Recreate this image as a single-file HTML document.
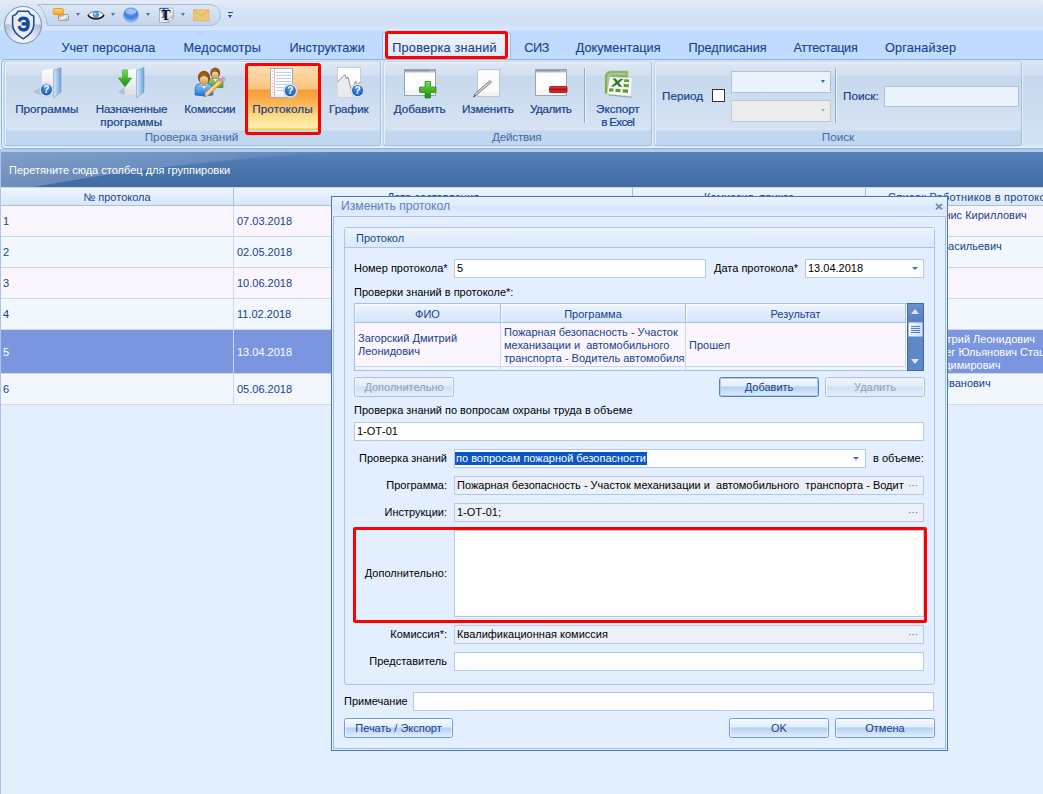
<!DOCTYPE html>
<html lang="ru">
<head>
<meta charset="utf-8">
<title>Изменить протокол</title>
<style>
*{box-sizing:border-box;margin:0;padding:0}
html,body{width:1043px;height:794px;overflow:hidden;background:#e3efff}
body{position:relative;font-family:"Liberation Sans",sans-serif;font-size:11px;color:#000}
.a{position:absolute;white-space:nowrap}
/* ---------- title / tabs ---------- */
#title{left:0;top:0;width:1043px;height:30px;background:linear-gradient(#e3e9f5 0,#e3e9f5 3px,#dce8f8 4px,#d6e4f7 12px,#cfdff5 22px,#d6e5f8 29px)}
#tabs{left:0;top:29px;width:1043px;height:31px;background:#bfdbff;border-top:1px solid #dbe9fb}
.tab{top:40px;font-size:12.7px;color:#15428b;-webkit-text-stroke:.1px #15428b;height:16px;line-height:16px}
#tabsel{left:382px;top:32px;width:129px;height:28px;background:linear-gradient(#eef4fc,#dde8f7);border:1px solid #9dbde8;border-bottom:0;border-radius:4px 4px 0 0}
/* ---------- ribbon ---------- */
#ribbon{left:1px;top:59px;width:1060px;height:90px;background:linear-gradient(#dbe6f4 0,#d1dff2 15px,#c7d8ed 16px,#d3e2f4 100%);border:1px solid #8db2e3;border-radius:4px;box-shadow:inset 1px -1px 0 #e4f5fc,inset 0 -2px 0 #dcedfa}
.grp{top:61px;height:85px;border:1px solid #a9c1de;border-color:#c3d4ea #a6bfe0 #9fbbe0 #c0d2ea;box-shadow:inset 1px 1px 0 #e8f0f9,1px 0 0 #e4edf8;border-radius:3px;background:linear-gradient(#dee8f5 0,#d3e0f1 13px,#c7d8ed 14px,#d6e3f3 68px,#c1d6ef 69px,#c1d6ef 100%)}
.gcap{top:130px;height:14px;line-height:14px;font-size:11.7px;color:#3e6aaa;text-align:center}
.rb{font-size:11.7px;color:#15428b;-webkit-text-stroke:.2px #15428b;text-align:center;line-height:13px}
/* ---------- grid ---------- */
#gp{left:0;top:152px;width:1043px;height:35px;background:linear-gradient(#5782ba 0,#4a75ad 50%,#426ba3 100%);overflow:hidden}
#strip{left:0;top:149px;width:1043px;height:3px;background:#b4cbea}
#ledge{left:0;top:149px;width:1px;height:645px;background:#a9c4ea;z-index:5}
.hd{top:187px;height:19px;background:linear-gradient(#eef5fe,#d8e7fb);border-right:1px solid #a6c0e4;border-bottom:1px solid #a6c0e4;border-top:1px solid #c4d6ef;text-align:center;line-height:17px;padding-top:1px;color:#15428b}
.row{left:0;width:1043px;border-bottom:1px solid #c9d9f0;color:#15428b}
.c{position:absolute;top:0;bottom:0;border-right:1px solid #c9d9f0;padding-left:3px;display:flex;align-items:center;white-space:nowrap;overflow:hidden}
.t4{line-height:13px;height:13px}
.odd{background:#fbf5fd}.even{background:#f2f7fe}
.sel{background:#7b96de;color:#fff}
/* ---------- dialog ---------- */
#dlg{left:331px;top:196px;width:617px;height:555px;background:#e3efff;border:1px solid #4a76b8}
.lb{height:14px;line-height:14px;margin-left:-1px}
.in{background:#fff;border:1px solid #b4c9e6;height:19px;line-height:17px;padding-left:2px}
.ro{background:#ebf0f9}
.btn{height:20px;border:1px solid #6f9ad8;border-radius:2.500px;background:linear-gradient(#f6fafe 0,#e3edfb 44%,#b3d0f4 50%,#c6dcf8 70%,#e3eefc 100%);box-shadow:inset 1px 0 0 rgba(255,255,255,.55),inset -1px 0 0 rgba(255,255,255,.55);text-align:center;line-height:18px;color:#15428b}
.btn.dis{color:#8e9fbd;border-color:#a9c0e2;background:linear-gradient(#eef4fc 0,#e3ecf9 44%,#d0dff2 50%,#d9e6f6 70%,#e6eefa 100%)}

#dttl{left:0;top:0;width:615px;height:19px;background:linear-gradient(#eaf2fe 0,#dfebfc 9px,#d6e5fa 10px,#e3eefd 100%)}
#dfr{left:1px;top:19px;width:613px;height:533px;border:1px solid #a3c0e8;background:#e3efff}
#gb{left:12px;top:30px;width:591px;height:458px;border:1px solid #a9c6ee;border-radius:3px;background:#e3efff}
#gbc{left:13px;top:31px;width:589px;height:20px;background:linear-gradient(#ecf4fe,#d9e8fb);border-bottom:1px solid #a9c6ee}
.lb.r{left:20px;width:96px;text-align:right}
.arr{width:0;height:0;border:3px solid transparent;border-top:3px solid #3a6cc0;border-bottom:0}
.dots{position:absolute;right:5px;top:0;color:#3a6cc0;letter-spacing:0px;font-size:10px}
#ig{left:22px;top:106px;width:570px;height:68px;border:1px solid #a6c0e4;background:#fbf5fd;overflow:hidden}
.ih{top:0;height:19px;background:linear-gradient(#ecf4fe,#d5e5fa);box-shadow:inset 1px 1px 0 #f7fafe;border-right:1px solid #a6c0e4;border-bottom:1px solid #a6c0e4;text-align:center;line-height:17px;padding-top:2px;color:#15428b}
.ir{top:19px;height:44px;border-right:1px solid #c9d9f0;border-bottom:1px solid #c9d9f0;padding-left:3px;line-height:13px;color:#15428b}
#sb{left:575px;top:106px;width:17px;height:68px;background:#5e86c8;border:1px solid #3f68a8}
#thumb{left:0;top:18px;width:15px;height:15px;background:linear-gradient(90deg,#f4f8fd,#cfdff4);border:1px solid #9db9e4;border-radius:1px;padding:3px 2px 0 2px}
#thumb i{display:block;height:1px;background:#5a7fbd;margin-bottom:1px}
.tri{width:0;height:0;border:4.5px solid transparent}
.tri.up{border-bottom:5px solid #dbe7f8;border-top:0}
.tri.dn{border-top:5px solid #dbe7f8;border-bottom:0}
.btn.foc{border-color:#4f82cf;box-shadow:inset 0 0 0 1px #a9cbf5}

#qat{left:38px;top:4px;width:184px;height:22px;border:1px solid #a9bfdf;border-radius:0 11px 11px 0;background:linear-gradient(#dbe6f5,#c6d6ec)}
#appb{left:3px;top:5px;width:40px;height:40px}
.qarr{width:0;height:0;border:2.500px solid transparent;border-top:3px solid #4a6fb5;border-bottom:0}
#selbtn{left:248px;top:66px;width:71px;height:64px;border-radius:2px;background:linear-gradient(#fedcb0 0,#fbc47f 23px,#f79a35 24px,#fbb858 38px,#fde08f 52px,#fdeeb0 62px,#fbc840 63px,#fbc840 64px)}
.rin{background:#eaf2fb;border:1px solid #abc1de}
</style>
</head>
<body>
<div class="a" id="title"></div>
<div class="a" id="tabs"></div>
<div class="a" id="tabsel"></div>
<div class="a tab" style="left:61.4px;letter-spacing:0.02px">Учет персонала</div>
<div class="a tab" style="left:183.4px;letter-spacing:0.2px">Медосмотры</div>
<div class="a tab" style="left:289.4px;letter-spacing:-0.02px">Инструктажи</div>
<div class="a tab" style="left:392.3px;letter-spacing:0.2px">Проверка знаний</div>
<div class="a tab" style="left:524.2px;letter-spacing:-0.42px">СИЗ</div>
<div class="a tab" style="left:575.7px;letter-spacing:0.04px">Документация</div>
<div class="a tab" style="left:688.5px;letter-spacing:-0.05px">Предписания</div>
<div class="a tab" style="left:793.4px;letter-spacing:-0.29px">Аттестация</div>
<div class="a tab" style="left:884.9px;letter-spacing:0.21px">Органайзер</div>
<div class="a" id="ribbon"></div>
<div class="a grp" style="left:4px;width:377px"></div>
<div class="a grp" style="left:383px;width:269px"></div>
<div class="a grp" style="left:654px;width:368px"></div>
<div class="a gcap" style="left:654px;width:368px">Поиск</div>
<!--RIBBON-BUTTONS-->
<!-- QAT -->
<svg class="a" style="left:36px;top:3px" width="190" height="25" viewBox="0 0 190 25"><defs><linearGradient id="qg" x1="0" y1="0" x2="0" y2="1"><stop offset="0" stop-color="#dde7f5"/><stop offset="1" stop-color="#c3d4ec"/></linearGradient></defs><path d="M1.500 1.500H174a10.500 10.500 0 0 1 0 21H11.500C10 12 7 6 1.500 1.500z" fill="url(#qg)" stroke="#a6bcde" stroke-width="1"/></svg>
<div class="a" id="appb"><svg width="40" height="40" viewBox="0 0 40 40"><defs><radialGradient id="ag" cx="50%" cy="105%" r="75%"><stop offset="0" stop-color="#ffffff"/><stop offset="0.45" stop-color="#e3e9f2"/><stop offset="1" stop-color="#aab9d2"/></radialGradient><linearGradient id="ag2" x1="0" y1="0" x2="0" y2="1"><stop offset="0" stop-color="#fdfeff"/><stop offset="1" stop-color="#e6ecf5"/></linearGradient><clipPath id="ac"><circle cx="20" cy="20" r="18.200"/></clipPath></defs><circle cx="20" cy="20" r="18.500" fill="url(#ag)" stroke="#8e9fbb" stroke-width="1"/><rect x="0" y="0" width="40" height="19.500" fill="url(#ag2)" clip-path="url(#ac)" opacity=".92"/><circle cx="20" cy="20" r="18.500" fill="none" stroke="#8e9fbb" stroke-width="1"/><path d="M14.800 6.200h10.800q.6 3.300 5.200 4.800v8.500c0 6.500-4 10.500-10.600 14.300-6.600-3.800-10.600-7.800-10.600-14.300v-8.500q4.600-1.500 5.200-4.800z" fill="#ececf0" stroke="#0f4c9c" stroke-width="1.500" stroke-linejoin="round"/><text transform="translate(20.800 25.800) scale(.88 1)" font-family="Liberation Sans,sans-serif" font-weight="bold" font-size="20" fill="#0f4c9c" stroke="#0f4c9c" stroke-width=".9" text-anchor="middle">Э</text></svg></div>
<!-- qat icons -->
<svg class="a" style="left:52px;top:7px" width="18" height="15" viewBox="0 0 18 15"><defs><linearGradient id="q1" x1="0" y1="0" x2="1" y2="1"><stop offset="0" stop-color="#8f8f8f"/><stop offset=".5" stop-color="#f4f4f4"/><stop offset="1" stop-color="#a9a9a9"/></linearGradient><linearGradient id="q2" x1="0" y1="0" x2="0" y2="1"><stop offset="0" stop-color="#ffd36a"/><stop offset="1" stop-color="#f5a623"/></linearGradient></defs><rect x="6.500" y="7.500" width="10" height="5.800" rx=".8" fill="url(#q1)" stroke="#8a8a8a" stroke-width=".8"/><rect x="1.300" y="1.500" width="10" height="6" rx="1.500" fill="url(#q2)" stroke="#e8961a" stroke-width=".9"/><path d="M10.800 7v2.500" stroke="#e8961a" stroke-width="1"/></svg>
<div class="a qarr" style="left:76px;top:13px"></div>
<svg class="a" style="left:87px;top:9px" width="18" height="12" viewBox="0 0 18 12"><path d="M1 6C4 1.200 14 1.200 17 6 14 10.800 4 10.800 1 6z" fill="#fff"/><path d="M1 6C4 1.200 14 1.200 17 6" fill="none" stroke="#6b6b6b" stroke-width="1"/><path d="M1 6C4 11 14 11 17 6" fill="none" stroke="#1a1a1a" stroke-width="1.700"/><circle cx="9" cy="5.800" r="3.200" fill="#4a97e2"/><circle cx="8.200" cy="4.800" r="1.200" fill="#a8d4fb"/></svg>
<div class="a qarr" style="left:111px;top:13px"></div>
<svg class="a" style="left:122px;top:7px" width="18" height="17" viewBox="0 0 18 17"><defs><radialGradient id="sg" cx="50%" cy="22%" r="80%"><stop offset="0" stop-color="#6ea5ea"/><stop offset="0.550" stop-color="#3f80dc"/><stop offset="1" stop-color="#b5d5f8"/></radialGradient></defs><circle cx="9" cy="8.300" r="7.800" fill="url(#sg)"/><ellipse cx="9" cy="4.500" rx="5.500" ry="3" fill="#cfe3fb" opacity=".55"/></svg>
<div class="a qarr" style="left:146px;top:13px"></div>
<svg class="a" style="left:158px;top:6px" width="18" height="18" viewBox="0 0 18 18"><defs><linearGradient id="tg" x1="0" y1="0" x2="1" y2="1"><stop offset="0" stop-color="#ffffff"/><stop offset=".6" stop-color="#e9e9e9"/><stop offset="1" stop-color="#9c9c9c"/></linearGradient></defs><path d="M1.500 2h11.500q2.500 0 2.500 2.500v7.500l-4.500 4.500h-9.500z" fill="url(#tg)" stroke="#a5a5a5" stroke-width=".8"/><path d="M11 16.500v-3.500q0-1 1-1h3.500z" fill="#f6f6f6" stroke="#a5a5a5" stroke-width=".6"/><text x="5.800" y="12.300" font-family="Liberation Serif,serif" font-weight="bold" font-size="14" text-anchor="middle" fill="#2b63c4">T</text><text x="7.800" y="14" font-family="Liberation Serif,serif" font-weight="bold" font-size="14" text-anchor="middle" fill="#111">T</text></svg>
<div class="a qarr" style="left:181px;top:13px"></div>
<svg class="a" style="left:193px;top:9px" width="17" height="13" viewBox="0 0 17 13"><rect x=".5" y=".8" width="15.500" height="11" fill="#eec878" stroke="#ddb663" stroke-width=".8"/><path d="M.8 1.200l7.500 6 7.500-6" fill="none" stroke="#d9ad55" stroke-width=".9"/><path d="M.8 11.500l5.200-5M15.700 11.500l-5.200-5" fill="none" stroke="#e3bb69" stroke-width=".6"/></svg>
<div class="a" style="left:228px;top:11.500px;width:5px;height:1.500px;background:#1f418e"></div>
<div class="a qarr" style="left:228px;top:14.500px;border-top-color:#1f418e;border-top-width:3.500px"></div>
<!-- group 1 buttons -->
<div class="a" id="selbtn"></div>
<div class="a" style="left:245px;top:63px;width:76px;height:72px;border:3px solid #f00;border-radius:3px"></div>
<div class="a" style="left:385px;top:31px;width:123px;height:28px;border:3px solid #f00;border-radius:3px"></div>
<div class="a" style="left:584px;top:68px;width:1px;height:55px;background:#8fa9cf"></div>
<div class="a" style="left:585px;top:68px;width:1px;height:55px;background:#e8f0fa"></div>
<div class="a rb" style="left:662px;top:89px;text-align:left">Период</div>
<div class="a" style="left:712px;top:89px;width:13px;height:13px;background:#fff;border:1px solid #333"></div>
<div class="a rin" style="left:731px;top:71px;width:100px;height:22px"></div>
<div class="a rin" style="left:731px;top:100px;width:100px;height:22px;background:#ececec;border-color:#c3c8d0"></div>
<div class="a qarr" style="left:820.500px;top:80px;border-top-color:#3a62a8"></div>
<div class="a qarr" style="left:820.500px;top:109px;border-top-color:#b3b3b3"></div>
<div class="a" style="left:835px;top:68px;width:1px;height:55px;background:#8fa9cf"></div>
<div class="a" style="left:836px;top:68px;width:1px;height:55px;background:#e8f0fa"></div>
<div class="a rb" style="left:843px;top:89px;text-align:left">Поиск:</div>
<div class="a rin" style="left:884px;top:86px;width:135px;height:21px"></div>
<div class="a rb" style="left:15.2px;top:102px;letter-spacing:-0.0px">Программы</div>
<div class="a rb" style="left:95.7px;top:102px;letter-spacing:-0.15px">Назначенные</div>
<div class="a rb" style="left:100.2px;top:115px;letter-spacing:0.11px">программы</div>
<div class="a rb" style="left:184.2px;top:102px;letter-spacing:-0.18px">Комиссии</div>
<div class="a rb" style="left:252.2px;top:102px;letter-spacing:0.1px">Протоколы</div>
<div class="a rb" style="left:329.0px;top:102px;letter-spacing:-0.04px">График</div>
<div class="a rb" style="left:393.7px;top:102px;letter-spacing:0.04px">Добавить</div>
<div class="a rb" style="left:462.1px;top:102px;letter-spacing:-0.14px">Изменить</div>
<div class="a rb" style="left:530.0px;top:102px;letter-spacing:-0.46px">Удалить</div>
<div class="a rb" style="left:596.1px;top:102px;letter-spacing:-0.05px">Экспорт</div>
<div class="a rb" style="left:601.3px;top:115px;letter-spacing:-0.74px">в Excel</div>
<div class="a gcap" style="left:144.7px;letter-spacing:0.02px">Проверка знаний</div>
<div class="a gcap" style="left:492.1px;letter-spacing:-0.24px">Действия</div>
<!--ICONS-->
<svg width="0" height="0" style="position:absolute"><defs>
<linearGradient id="fb" x1="0" y1="0" x2="1" y2="0"><stop offset="0" stop-color="#d9e9f8"/><stop offset="1" stop-color="#6fa3dc"/></linearGradient>
<linearGradient id="fw" x1="0" y1="0" x2="0" y2="1"><stop offset="0" stop-color="#ffffff"/><stop offset="1" stop-color="#d9dde3"/></linearGradient>
<radialGradient id="bq" cx="50%" cy="35%" r="65%"><stop offset="0" stop-color="#4f9be8"/><stop offset="1" stop-color="#1559b5"/></radialGradient>
<linearGradient id="gp2" x1="0" y1="0" x2="0" y2="1"><stop offset="0" stop-color="#7be04a"/><stop offset="1" stop-color="#148a10"/></linearGradient>
<linearGradient id="rm" x1="0" y1="0" x2="0" y2="1"><stop offset="0" stop-color="#e8474a"/><stop offset=".5" stop-color="#b80d12"/><stop offset="1" stop-color="#d9383c"/></linearGradient>
<linearGradient id="wt" x1="0" y1="0" x2="0" y2="1"><stop offset="0" stop-color="#8e9399"/><stop offset="1" stop-color="#c9cdd2"/></linearGradient>
<g id="badge"><circle cx="0" cy="0" r="7" fill="#e9edf2" stroke="#b9c0ca" stroke-width=".6"/><circle cx="0" cy="0" r="5.600" fill="url(#bq)"/><text x="0" y="3.600" font-family="Liberation Sans,sans-serif" font-weight="bold" font-size="10" fill="#fff" text-anchor="middle">?</text></g>
<g id="folder"><path d="M0 2l12-2v27l-12 1.500z" fill="url(#fw)" stroke="#cfd3d9" stroke-width=".5"/><path d="M12 2.500l7.500-3v24.500l-7.500 6z" fill="url(#fb)" stroke="#5f93cf" stroke-width=".5"/></g>
<g id="win"><rect x=".5" y=".5" width="31" height="26" fill="#fdfdfd" stroke="#9ea4ad"/><rect x="1" y="1" width="30" height="1.800" fill="#8d96a8"/><rect x="1" y="2.800" width="30" height="1" fill="#d5d9e0"/><path d="M25 1.900h1.200M27 1.900h1.200M29 1.900h1.200" stroke="#e6e9ee" stroke-width=".8"/><rect x="1" y="21" width="30" height="5" fill="#eceef1" opacity=".6"/></g>
</defs></svg>
<!-- Программы -->
<svg class="a" style="left:31px;top:66px" width="34" height="34" viewBox="0 0 34 34"><path d="M2 26l9-6v10z" fill="#9aa7b8" opacity=".5"/><use href="#folder" x="10.500" y="2"/><use href="#badge" x="15.400" y="23.800"/></svg>
<!-- Назначенные -->
<svg class="a" style="left:114px;top:66px" width="34" height="34" viewBox="0 0 34 34"><path d="M4 26l8-6v10z" fill="#9aa7b8" opacity=".5"/><use href="#folder" x="10.500" y="2"/><path d="M8.500 4h5v8h4.300l-6.800 8.800-6.800-8.800h4.300z" fill="url(#gp2)" stroke="#2a9a1c" stroke-width=".5"/></svg>
<!-- Комиссии -->
<svg class="a" style="left:194px;top:65px" width="34" height="34" viewBox="0 0 34 34"><defs>
<radialGradient id="hr" cx="45%" cy="35%" r="70%"><stop offset="0" stop-color="#b56a1e"/><stop offset="1" stop-color="#6e3509"/></radialGradient>
<linearGradient id="sk" x1="0" y1="0" x2="0" y2="1"><stop offset="0" stop-color="#f3d9a0"/><stop offset="1" stop-color="#c59a5c"/></linearGradient>
<linearGradient id="bl" x1="0" y1="0" x2="0" y2="1"><stop offset="0" stop-color="#8cc4f6"/><stop offset=".6" stop-color="#4d9ae8"/><stop offset="1" stop-color="#1d6fd2"/></linearGradient>
<linearGradient id="gn" x1="0" y1="0" x2="0" y2="1"><stop offset="0" stop-color="#9ccc6a"/><stop offset="1" stop-color="#5c9a30"/></linearGradient>
<linearGradient id="pc" x1="0" y1="0" x2="1" y2="1"><stop offset="0" stop-color="#f58a06"/><stop offset=".45" stop-color="#ffe3a8"/><stop offset=".6" stop-color="#fba21d"/><stop offset="1" stop-color="#e07c00"/></linearGradient></defs>
<path d="M14 22.500v-4.500c0-3 2-4.500 4.500-4.500h6c2.500 0 4.500 1.500 4.500 4.500v4.500z" fill="url(#gn)" stroke="#4f8a2a" stroke-width=".7"/><path d="M19 13.600l2.500 3 2.500-3z" fill="#f4f7ee"/>
<rect x="19.300" y="10" width="3.600" height="4" fill="#c59a5c"/><ellipse cx="21.200" cy="8" rx="4.900" ry="5.600" fill="url(#hr)"/><path d="M17.800 9.500c0-2 1.500-2.700 3.400-2.700s3.400.7 3.400 2.700c0 2.500-1.400 4.400-3.400 4.400s-3.400-1.900-3.400-4.400z" fill="url(#sk)"/>
<path d="M1.200 30v-6c0-3.500 2.300-5.200 5.200-5.200h7.200c2.900 0 5.200 1.700 5.200 5.200v6q-8.800 1.500-17.600 0z" fill="url(#bl)" stroke="#1b63c0" stroke-width=".8"/><path d="M6.500 19l3.500 4.800 3.500-4.800z" fill="#f3f7fc"/>
<rect x="7.800" y="17" width="4.400" height="4" fill="#c59a5c"/><ellipse cx="10" cy="12.300" rx="6" ry="6.500" fill="url(#hr)"/><path d="M5.800 14.500c0-2.500 1.800-3.300 4.200-3.300s4.200.8 4.200 3.300c0 3-1.800 5.500-4.200 5.500s-4.200-2.500-4.200-5.500z" fill="url(#sk)"/>
<path d="M10.300 31.800l1.500-4.300 13.400-12.300 2.600 2.900-13.400 12.200z" fill="url(#pc)" stroke="#c96f05" stroke-width=".5"/><path d="M10.300 31.800l1.500-4.300 2.600 2.800z" fill="#e9cf9c"/><path d="M10.300 31.800l.6-1.800 1.100 1.200z" fill="#3a3a3a"/><path d="M25.200 15.200l1.300-1.200 2.600 2.900-1.300 1.200z" fill="#b9bcc2" stroke="#8a8d93" stroke-width=".4"/><path d="M26.500 14l1.800-1.700c1.200-1.100 3.800 1.800 2.600 2.900l-1.800 1.700z" fill="#ee8fc3" stroke="#cf6aa5" stroke-width=".4"/></svg>
<!-- Протоколы -->
<svg class="a" style="left:269px;top:67px" width="34" height="34" viewBox="0 0 34 34"><rect x="1.500" y="1.500" width="22" height="29" fill="#fdfdfd" stroke="#a9adb3"/><rect x="2" y="27" width="21" height="3" fill="#eeeff2"/><path d="M5.500 2v28" stroke="#f2a0a0" stroke-width=".8"/><path d="M7 5.500h15M7 8.500h15M7 11.500h15M7 14.500h15M7 17.500h15M7 20.500h15M7 23.500h12" stroke="#b3cbec" stroke-width=".9"/><path d="M3.500 4v24" stroke="#9a9a9a" stroke-width=".8" stroke-dasharray=".8 2.200"/><use href="#badge" x="21.300" y="23.700"/></svg>
<!-- График -->
<svg class="a" style="left:336px;top:66px" width="34" height="34" viewBox="0 0 34 34"><rect x="1.500" y="1.500" width="23" height="29.500" fill="#fdfdfd" stroke="#c9ccd1"/><path d="M1.500 16L8.800 8.700l1.600 4.200 1.600-1.900L15.700 26l3.700-11 1.600 3 3.500-1.500V31H1.500z" fill="#ebebed"/><path d="M1.500 16L8.800 8.700l1.600 4.200 1.600-1.900L15.700 26l3.700-11 1.600 3 3.500-1.500" fill="none" stroke="#8a8e95" stroke-width="1"/><use href="#badge" x="21.600" y="24.500"/></svg>
<!-- Добавить -->
<svg class="a" style="left:404px;top:69px" width="34" height="31" viewBox="0 0 34 31"><use href="#win"/><path d="M21 12.500h5.500v5.500h5.500v5.500h-5.500v5.500h-5.500v-5.500h-5.500v-5.500h5.500z" fill="url(#gp2)" stroke="#2c8f22" stroke-width=".8"/></svg>
<!-- Изменить -->
<svg class="a" style="left:472px;top:69px" width="30" height="31" viewBox="0 0 30 31"><rect x="5.500" y=".5" width="22" height="27" fill="#fbfbfc" stroke="#c3c6cb"/><rect x="6" y="23" width="21" height="4" fill="#f0f1f3"/><path d="M1.500 28l2-4 14.500-12.500 1.500 1.700-14.500 12.500z" fill="#c9ccd1" stroke="#5d6168" stroke-width=".7"/><path d="M1.500 28l1-2 1 1z" fill="#222"/></svg>
<!-- Удалить -->
<svg class="a" style="left:535px;top:69px" width="34" height="31" viewBox="0 0 34 31"><use href="#win"/><rect x="14.500" y="17.500" width="17.500" height="6" rx="1" fill="url(#rm)" stroke="#8f0a0e" stroke-width=".8"/></svg>
<!-- Excel -->
<svg class="a" style="left:603px;top:69px" width="32" height="30" viewBox="0 0 32 30"><defs><linearGradient id="xg" x1="0" y1="0" x2="0" y2="1"><stop offset="0" stop-color="#8fb276"/><stop offset="1" stop-color="#7aa45f"/></linearGradient></defs><path d="M1.500 8.500c0-4.500 2.500-7 7-7h15.500q1.300 0 1.300 1.300v21q0 1.300-1.300 1.300h-21.200q-1.300 0-1.300-1.300z" fill="url(#xg)" stroke="#c4e2b2" stroke-width="1"/><path d="M4 9.500c0-3.500 2-5.500 5.500-5.500h13.500v2h-12.500c-3 0-4.500 1.500-4.500 4.500v12h-2z" fill="#b5d3a0" opacity=".7"/><path d="M5.300 25.800l23.300 2.400" stroke="#6d7f8a" stroke-width="1.200" opacity=".6"/><path d="M6.900 8l21.800 1.100-1.100 17.900-23.300-2.300z" fill="#fcfdf8" stroke="#e3ecd8" stroke-width=".5"/><g fill="#55a03a"><path d="M21.200 10.200l5 .3-.2 2.600-5-.3zM20.800 15l5.100.3-.2 3-5.100-.3zM6.300 19.200l4.300.3-.2 3.200-4.300-.3zM12.600 19.700l5 .3-.2 3.300-5-.3zM19.700 20.200l5.400.4-.2 3.300-5.400-.4z"/></g><path d="M9.500 9.300l3.300.2 1.800 2.400 2.800-2.200 3.200.2-4.600 3.800 3.200 4.300-3.200-.2-1.800-2.500-3.300 2.300-3.200-.2 5-4z" fill="#2e7d1c"/></svg>
<!--/ICONS-->
<!--/RIBBON-BUTTONS-->
<div class="a" id="strip"></div>
<div class="a" id="gp"><svg class="a" style="left:0;top:0" width="340" height="35" viewBox="0 0 340 35"><defs><linearGradient id="wg" x1="0" y1="0" x2="1" y2="0"><stop offset="0" stop-color="#fff" stop-opacity=".24"/><stop offset=".5" stop-color="#fff" stop-opacity=".17"/><stop offset="1" stop-color="#fff" stop-opacity=".03"/></linearGradient></defs><path d="M0 0H336Q170 10 34 35H0z" fill="url(#wg)"/></svg></div>
<div class="a" id="ledge"></div>
<div class="a" style="left:9px;top:163px;color:#fff;line-height:14px">Перетяните сюда столбец для группировки</div>
<!--GRID-->
<div class="a hd" style="left:0;width:234px;border-left:1px solid #c4d6ef">№ протокола</div>
<div class="a hd" style="left:234px;width:399px">Дата составления</div>
<div class="a hd" style="left:633px;width:233px">Комиссия, приказ</div>
<div class="a hd" style="left:866px;width:212px;text-align:left;padding-left:22px;letter-spacing:.25px">Список Работников в протоколе</div>
<div class="a row odd" style="top:206px;height:31px"><div class="c" style="left:0;width:234px">1</div><div class="c" style="left:234px;width:399px">07.03.2018</div><div class="c" style="left:633px;width:233px"></div><div class="a t4" style="left:890px;top:3px">Иванов Денис Кириллович</div></div>
<div class="a row even" style="top:237px;height:31px"><div class="c" style="left:0;width:234px">2</div><div class="c" style="left:234px;width:399px">02.05.2018</div><div class="c" style="left:633px;width:233px"></div><div class="a t4" style="left:872px;top:3px">Петров Иван Васильевич</div></div>
<div class="a row odd" style="top:268px;height:31px"><div class="c" style="left:0;width:234px">3</div><div class="c" style="left:234px;width:399px">10.06.2018</div><div class="c" style="left:633px;width:233px"></div></div>
<div class="a row even" style="top:299px;height:31px"><div class="c" style="left:0;width:234px">4</div><div class="c" style="left:234px;width:399px">11.02.2018</div><div class="c" style="left:633px;width:233px"></div></div>
<div class="a row sel" style="top:330px;height:44px"><div class="c" style="left:0;width:234px">5</div><div class="c" style="left:234px;width:399px">13.04.2018</div><div class="c" style="left:633px;width:233px"></div><div class="a t4" style="left:871px;top:3px">Загорский Дмитрий Леонидович</div><div class="a t4" style="left:880px;top:16px">Кузнецов Олег Юльянович Стацкевич</div><div class="a t4" style="left:885px;top:29px">Сергей Владимирович</div></div>
<div class="a row even" style="top:374px;height:31px"><div class="c" style="left:0;width:234px">6</div><div class="c" style="left:234px;width:399px">05.06.2018</div><div class="c" style="left:633px;width:233px"></div><div class="a t4" style="left:881px;top:3px">Котов Петр Иванович</div></div>
<!--/GRID-->
<!--DIALOG-->
<div class="a" id="dlg"><div class="a" style="left:0;top:0;width:0;height:0">
<div class="a" id="dttl"></div>
<div class="a" id="dfr"></div>
<div class="a" style="left:9px;top:1px;font-size:12.15px;color:#5f7fbe;line-height:16px">Изменить протокол</div>
<svg class="a" style="left:603px;top:6px" width="9" height="9" viewBox="0 0 9 9"><path d="M1 2l6 5.500M7 2l-6 5.500" stroke="#fff" stroke-width="2" fill="none"/><path d="M1 1l6 5.500M7 1l-6 5.500" stroke="#6f8ec5" stroke-width="2" fill="none"/></svg>
<div class="a" id="gb"></div>
<div class="a" id="gbc"></div>
<div class="a lb" style="left:25px;top:34px;color:#15428b;font-size:11px">Протокол</div>
<div class="a lb" style="left:23px;top:64px">Номер протокола*</div>
<div class="a in" style="left:122px;top:62px;width:252px">5</div>
<div class="a lb" style="left:383px;top:64px">Дата протокола*</div>
<div class="a in" style="left:473px;top:62px;width:119px">13.04.2018</div>
<div class="a arr" style="left:580px;top:70px"></div>
<div class="a lb" style="left:23px;top:88px">Проверки знаний в протоколе*:</div>
<!-- inner grid -->
<div class="a" id="ig">
<div class="a ih" style="left:0;width:146px">ФИО</div>
<div class="a ih" style="left:146px;width:185px">Программа</div>
<div class="a ih" style="left:331px;width:220px">Результат</div>
<div class="a ir" style="left:0;width:146px;padding-top:9px">Загорский Дмитрий<br>Леонидович</div>
<div class="a ir" style="left:146px;width:185px;padding-top:3px">Пожарная безопасность - Участок<br>механизации и&nbsp; автомобильного<br>транспорта - Водитель автомобиля</div>
<div class="a ir" style="left:331px;width:220px;padding-top:16px">Прошел</div>
<div class="a" style="left:0;top:63px;width:553px;height:3px;background:#eef4fc"></div>
<div class="a" style="left:145px;top:63px;width:1px;height:3px;background:#c9d9f0"></div>
<div class="a" style="left:330px;top:63px;width:1px;height:3px;background:#c9d9f0"></div>
</div>
<div class="a" id="sb"><div class="a" style="left:0;top:0;width:15px;height:17px;background:linear-gradient(#6a90cf,#577fc3)"></div><div class="a tri up" style="left:3px;top:5px"></div><div class="a" id="thumb"><i></i><i></i><i></i><i></i></div><div class="a tri dn" style="left:3px;top:55px"></div></div>
<div class="a btn dis" style="left:22px;top:180px;width:100px">Дополнительно</div>
<div class="a btn foc" style="left:387px;top:180px;width:100px">Добавить</div>
<div class="a btn dis" style="left:493px;top:180px;width:100px">Удалить</div>
<div class="a lb" style="left:23px;top:206px">Проверка знаний по вопросам охраны труда в объеме</div>
<div class="a in" style="left:22px;top:225px;width:570px">1-ОТ-01</div>
<div class="a lb" style="left:28px;top:254px">Проверка знаний</div>
<div class="a in" style="left:122px;top:252px;width:412px"><span style="display:inline-block;background:#0a56c9;color:#fff;height:13px;line-height:13px;margin-left:-2px;padding:0 1px;vertical-align:top;margin-top:2px">по вопросам пожарной безопасности</span></div>
<div class="a arr" style="left:521px;top:260px"></div>
<div class="a lb" style="left:542px;top:254px">в объеме:</div>
<div class="a lb r" style="top:281px">Программа:</div>
<div class="a in ro" style="left:122px;top:279px;width:470px">Пожарная безопасность - Участок механизации и&nbsp; автомобильного&nbsp; транспорта - Водит<span class="dots">···</span></div>
<div class="a lb r" style="top:308px">Инструкции:</div>
<div class="a in ro" style="left:122px;top:306px;width:470px">1-ОТ-01;<span class="dots">···</span></div>
<div class="a lb r" style="top:369px">Дополнительно:</div>
<div class="a in" style="left:122px;top:333px;width:470px;height:87px"></div>
<div class="a" style="left:21px;top:330px;width:574px;height:96px;border:3px solid #f00;border-radius:2px"></div>
<div class="a lb r" style="top:430px">Комиссия*:</div>
<div class="a in ro" style="left:122px;top:428px;width:470px">Квалификационная комиссия<span class="dots">···</span></div>
<div class="a lb r" style="top:457px">Представитель</div>
<div class="a in" style="left:122px;top:455px;width:470px"></div>
<div class="a lb" style="left:13px;top:497px">Примечание</div>
<div class="a in" style="left:81px;top:495px;width:521px"></div>
<div class="a btn" style="left:12px;top:521px;width:109px">Печать / Экспорт</div>
<div class="a btn" style="left:397px;top:521px;width:100px">OK</div>
<div class="a btn" style="left:503px;top:521px;width:100px">Отмена</div>
</div></div>
<!--/DIALOG-->
</body>
</html>
